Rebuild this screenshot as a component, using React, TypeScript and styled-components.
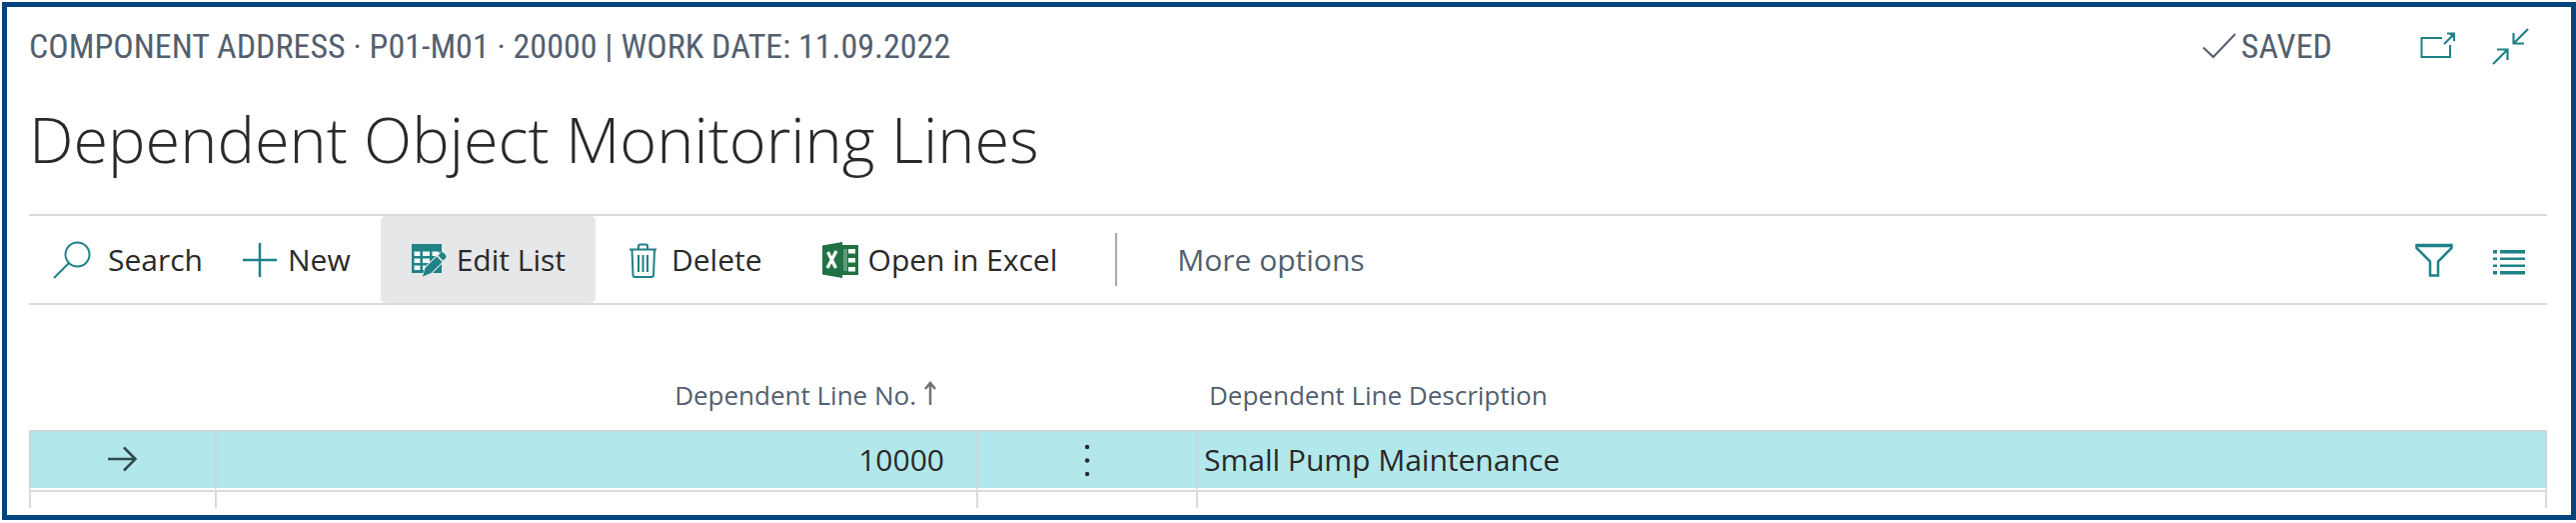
import React from 'react';
import styled, { createGlobalStyle } from 'styled-components';

const teal = '#1f8287';
const slate = '#535f6f';
const ink = '#292929';
const rule = '#d8dadd';
const textFont = "'Open Sans', 'Noto Sans', sans-serif";
const captionFont = "'Roboto Condensed', Roboto, sans-serif";

const GlobalStyle = createGlobalStyle`
  *, *::before, *::after { box-sizing: border-box; }
  body { margin: 0; background: #fff; }
  button { appearance: none; margin: 0; border: 0; padding: 0; background: none; cursor: pointer; }
`;

const Page = styled.main`
  margin: 2px 0 2px 2px;
  border: 5px solid #00437d;
  padding: 0 24px 7px 22px;
  background: #fff;
  color: ${ink};
  font-family: ${textFont};
`;

const TopBar = styled.header`
  display: flex;
  align-items: center;
  justify-content: space-between;
  height: 78px;
  color: ${slate};
  font: 400 34px/40px ${captionFont};
  white-space: nowrap;
`;

const Status = styled.div`
  display: flex;
  align-items: center;
`;

const Saved = styled.span`
  display: flex;
  align-items: center;
  gap: 5px;
`;

const WindowActions = styled.div`
  display: flex;
  gap: 36px;
  margin: 0 18px 0 88px;
`;

const IconButton = styled.button`
  display: flex;
  color: ${teal};
`;

const Title = styled.h1`
  margin: 0;
  height: 129px;
  padding-top: 10px;
  font-size: 63px;
  font-weight: 300;
  line-height: 88px;
  white-space: nowrap;
`;

const Toolbar = styled.nav`
  display: flex;
  align-items: center;
  height: 91px;
  border-top: 2px solid ${rule};
  border-bottom: 2px solid ${rule};
`;

const Action = styled.button<{ $active?: boolean; $lead?: boolean }>`
  display: flex;
  align-items: center;
  gap: ${p => (p.$lead ? 17 : 10)}px;
  height: 87px;
  padding: ${p => (p.$lead ? '0 9px 0 24px' : '0 30px')};
  border-radius: 5px;
  background: ${p => (p.$active ? '#e5e7e9' : 'transparent')};
  color: ${ink};
  font: 400 30px/40px ${textFont};
  white-space: nowrap;

  svg { color: ${teal}; flex: none; }
`;

const Separator = styled.div`
  width: 2px;
  height: 53px;
  margin: 0 30px 0 28px;
  background: #a3a9b2;
`;

const MoreAction = styled(Action)`
  color: ${slate};
`;

const ViewActions = styled.div`
  display: flex;
  gap: 40px;
  margin: 0 20px 0 auto;
`;

const Grid = styled.table`
  width: 100%;
  table-layout: fixed;
  border-collapse: separate;
  border-spacing: 0;
`;

const Col = styled.col<{ $width?: number }>`
  width: ${p => (p.$width ? `${p.$width}px` : 'auto')};
`;

const HeadCell = styled.th<{ $numeric?: boolean }>`
  height: 125px;
  padding: 0 40px 18px 13px;
  vertical-align: bottom;
  text-align: ${p => (p.$numeric ? 'right' : 'left')};
  color: ${slate};
  font-size: 26px;
  font-weight: 400;
  line-height: 34px;
  white-space: nowrap;
`;

const SortLabel = styled.span`
  display: inline-flex;
  gap: 8px;
  vertical-align: bottom;
`;

const Cell = styled.td<{ $align?: string }>`
  height: 60px;
  padding: 0 32px 0 6px;
  border-top: 2px solid #c6d9dd;
  border-left: 2px solid #c6d9dd;
  background: #b2e8eb;
  text-align: ${p => p.$align ?? 'left'};
  font-size: 30px;
  line-height: 40px;
  white-space: nowrap;

  &:last-child { border-right: 2px solid #c6d9dd; }
`;

const IconCell = styled(Cell)`
  padding: 0;

  svg, button { display: block; margin: 0 auto; }
`;

const SelectedRow = styled.tr`
  td { border-bottom: 2px solid #fff; }
`;

const EmptyCell = styled.td`
  height: 18px;
  padding: 0;
  border-top: 2px solid ${rule};
  border-left: 2px solid ${rule};

  &:last-child { border-right: 2px solid ${rule}; }
`;

const CheckIcon = () => (
  <svg width="34" height="36" viewBox="0 0 34 36" fill="none" stroke="currentColor" strokeWidth="2" aria-hidden="true">
    <path d="M1 19.500 11 29 33 6" />
  </svg>
);

const PopOutIcon = () => (
  <svg width="36" height="38" viewBox="0 0 36 38" fill="none" stroke="currentColor" strokeWidth="2" aria-hidden="true">
    <path d="M22 11H1.500V30H30V18M24 17 34 7M27 6.500H34V14" />
    <path d="M28 6H34.500V12.500Z" fill="currentColor" stroke="none" />
  </svg>
);

const CollapseIcon = () => (
  <svg width="37" height="38" viewBox="0 0 37 38" fill="none" stroke="currentColor" strokeWidth="2.200" aria-hidden="true">
    <path d="M36 2 22 16M21.500 6V16.500H32M1 37 15 23M5 22.500H15.500V33" />
  </svg>
);

const SearchIcon = () => (
  <svg width="38" height="38" viewBox="0 0 38 38" fill="none" stroke="currentColor" strokeWidth="2" aria-hidden="true">
    <circle cx="24.500" cy="13.500" r="12" />
    <path d="M16 22 1 37" />
  </svg>
);

const PlusIcon = () => (
  <svg width="36" height="36" viewBox="0 0 36 36" fill="none" stroke="currentColor" strokeWidth="2.500" aria-hidden="true">
    <path d="M18 1V35M1 18H35" />
  </svg>
);

const EditListIcon = () => (
  <svg width="36" height="36" viewBox="0 0 36 36" fill="none" aria-hidden="true">
    <path d="M1 2H31V31H1Z" fill="currentColor" />
    <g fill="#f4fafa">
      <path d="M3.500 9.500H9.500V14H3.500ZM12 9.500H19V14H12ZM21.500 9.500H28V14H21.500Z" />
      <path d="M3.500 16.500H9.500V21H3.500ZM12 16.500H19V21H12Z" />
      <path d="M3.500 23.500H9.500V28H3.500ZM12 23.500H16V28H12Z" />
    </g>
    <path d="M11 36 14 25 29 10 37 16 22 31Z" fill="#e5e7e9" />
    <path d="M12 34.500 14.500 26 26 14.500 31.500 20 20.500 31Z M27.500 13.500 30 11Q31.500 9.500 33 11L35 13Q36 14.500 35 16L32.500 18.500Z M31 27V31H27Z" fill="currentColor" />
  </svg>
);

const TrashIcon = () => (
  <svg width="36" height="36" viewBox="0 0 36 36" fill="none" stroke="currentColor" strokeWidth="2" aria-hidden="true">
    <path d="M4 7.500H31M13 7V4Q13 2.500 14.500 2.500H20.500Q22 2.500 22 4V7M6.500 8 7.500 33Q7.500 35 9.500 35H26Q28 35 28 33L29 8M13 13V30M17.500 13V30M22 13V30" />
  </svg>
);

const ExcelIcon = () => (
  <svg width="36" height="38" viewBox="1 0 36 38" aria-hidden="true">
    <path d="M20 4H37V34H20Z" fill="#217346" />
    <path d="M22 8H26V30H22Z" fill="#5c9b77" />
    <path d="M27 8H34V12.500H27ZM27 17H34V21.500H27ZM27 26H34V30.500H27Z" fill="#fff" />
    <path d="M1 4.500 21 1V37L1 33.500Z" fill="#217346" />
    <path d="M6.500 11 14.500 27M15 10 6 27" fill="none" stroke="#fff" strokeWidth="3.200" />
  </svg>
);

const FilterIcon = () => (
  <svg width="38" height="36" viewBox="0 0 38 36" fill="none" stroke="currentColor" strokeWidth="2.500" aria-hidden="true">
    <path d="M1.500 3H36.500V6L23 19.500V33.500H15V19.500L1.500 6Z" />
    <path d="M2 4H36" />
  </svg>
);

const ListIcon = () => (
  <svg width="34" height="36" viewBox="0 0 34 36" fill="currentColor" aria-hidden="true">
    <path d="M0 8H4V11.500H0ZM7 8H32V11.500H7ZM0 15.500H4V18H0ZM7 15.500H32V18H7ZM0 22.500H4V25H0ZM7 22.500H32V25H7ZM0 29H4V32.500H0ZM7 29H32V32.500H7Z" />
  </svg>
);

const SortIcon = () => (
  <svg width="12" height="28" viewBox="0 0 12 28" fill="none" stroke="#6f7378" strokeWidth="2.500" aria-label="Sorted ascending">
    <path d="M6 27V5M1 11 6 5 11 11" />
  </svg>
);

const RowArrowIcon = () => (
  <svg width="30" height="28" viewBox="0 0 30 28" fill="none" stroke="#30494c" strokeWidth="2.500" aria-label="Current row">
    <path d="M0 13H27M16 1.500 27.500 13 16 24.500" />
  </svg>
);

const DotsIcon = () => (
  <svg width="8" height="34" viewBox="0 0 8 34" fill={ink} aria-hidden="true">
    <circle cx="4" cy="4" r="2.200" />
    <circle cx="4" cy="17.500" r="2.200" />
    <circle cx="4" cy="31" r="2.200" />
  </svg>
);

export default function App() {
  return (
    <>
      <GlobalStyle />
      <Page>
        <TopBar>
          <span>COMPONENT ADDRESS · P01-M01 · 20000 | WORK DATE: 11.09.2022</span>
          <Status>
            <Saved><CheckIcon />SAVED</Saved>
            <WindowActions>
              <IconButton type="button" aria-label="Open in new window"><PopOutIcon /></IconButton>
              <IconButton type="button" aria-label="Collapse"><CollapseIcon /></IconButton>
            </WindowActions>
          </Status>
        </TopBar>
        <Title>Dependent Object Monitoring Lines</Title>
        <Toolbar aria-label="Actions">
          <Action type="button" $lead><SearchIcon />Search</Action>
          <Action type="button"><PlusIcon />New</Action>
          <Action type="button" $active aria-pressed="true"><EditListIcon />Edit List</Action>
          <Action type="button"><TrashIcon />Delete</Action>
          <Action type="button"><ExcelIcon />Open in Excel</Action>
          <Separator />
          <MoreAction type="button">More options</MoreAction>
          <ViewActions>
            <IconButton type="button" aria-label="Filter"><FilterIcon /></IconButton>
            <IconButton type="button" aria-label="List view"><ListIcon /></IconButton>
          </ViewActions>
        </Toolbar>
        <Grid>
          <colgroup>
            <Col $width={186} />
            <Col $width={762} />
            <Col $width={220} />
            <Col />
          </colgroup>
          <thead>
            <tr>
              <HeadCell aria-label="Row marker" />
              <HeadCell $numeric aria-sort="ascending">
                <SortLabel>Dependent Line No.<SortIcon /></SortLabel>
              </HeadCell>
              <HeadCell aria-label="Row menu" />
              <HeadCell>Dependent Line Description</HeadCell>
            </tr>
          </thead>
          <tbody>
            <SelectedRow>
              <IconCell><RowArrowIcon /></IconCell>
              <Cell $align="right">10000</Cell>
              <IconCell>
                <IconButton type="button" aria-label="Show more options"><DotsIcon /></IconButton>
              </IconCell>
              <Cell>Small Pump Maintenance</Cell>
            </SelectedRow>
            <tr>
              <EmptyCell />
              <EmptyCell />
              <EmptyCell />
              <EmptyCell />
            </tr>
          </tbody>
        </Grid>
      </Page>
    </>
  );
}
